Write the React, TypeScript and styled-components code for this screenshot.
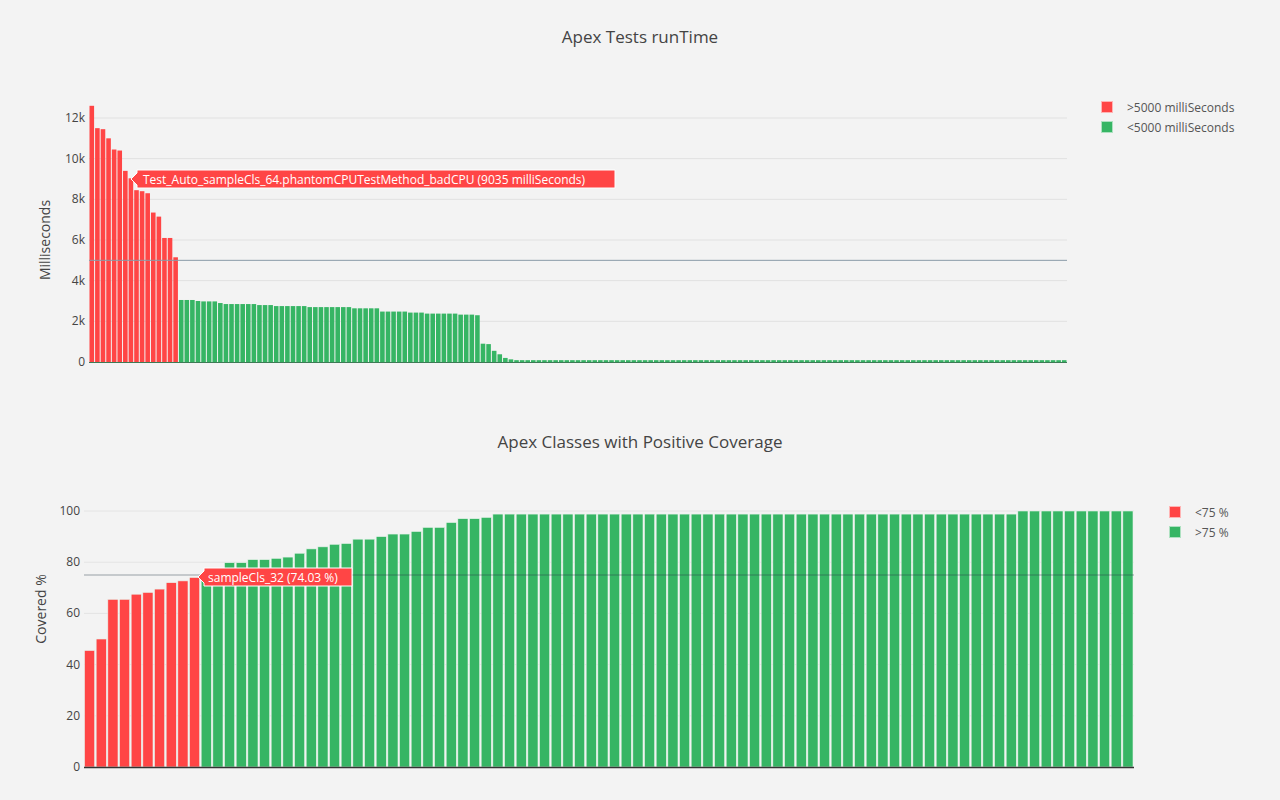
import React from "react";
import styled, { createGlobalStyle } from "styled-components";

const Global = createGlobalStyle`
  html, body { margin: 0; padding: 0; background: #f3f3f3; }
  body { font-family: "Open Sans", "Liberation Sans", sans-serif; color: #444; }
`;

const RED = "#ff4545";
const GREEN = "#36b564";

const Page = styled.div`
  width: 1280px;
  height: 800px;
  display: flex;
  flex-direction: column;
  background: #f3f3f3;
  overflow: hidden;
`;
const Panel = styled.section<{ $h: number }>`
  height: ${(p) => p.$h}px;
  display: flex;
  flex-direction: column;
`;
const Title = styled.div<{ $h: number }>`
  height: ${(p) => p.$h}px;
  display: flex;
  align-items: center;
  justify-content: center;
  font-size: 17px;
  color: #444;
`;
const Body = styled.div`
  flex: 1;
  display: flex;
`;
const Legend = styled.div<{ $ml: number; $pt: number }>`
  margin-left: ${(p) => p.$ml}px;
  padding-top: ${(p) => p.$pt}px;
  display: flex;
  flex-direction: column;
  gap: 6px;
`;
const LegendItem = styled.div`
  display: flex;
  align-items: center;
  gap: 14px;
  font-size: 12px;
  color: #555;
  height: 14px;
`;
const Swatch = styled.span<{ $c: string }>`
  width: 12px;
  height: 12px;
  background: ${(p) => p.$c};
  border: 1px solid rgba(255,255,255,0.6);
  box-sizing: border-box;
`;

const topRed = [12600, 11500, 11450, 11000, 10450, 10400, 9400, 9035, 8450, 8400, 8300, 7350, 7150, 6100, 6100, 5150];
const topGreen: number[] = [];
{
  const seg: [number, number][] = [
    [3050, 3], [3000, 1], [2980, 3], [2900, 1], [2850, 6], [2800, 3], [2750, 6], [2700, 8], [2640, 5],
    [2480, 5], [2430, 3], [2380, 6], [2330, 3], [2300, 6], [2250, 3], [2200, 4], [2180, 1],
  ];
  seg.forEach(([v, n]) => { for (let i = 0; i < n; i++) topGreen.push(v); });
  topGreen.length = 54;
  topGreen.push(900, 880, 550, 380, 200, 130);
  while (topRed.length + topGreen.length < 175) topGreen.push(90);
}
const topVals = [...topRed, ...topGreen];

const botRed = [45.5, 50, 65.5, 65.5, 67.5, 68.2, 69.5, 72, 72.7, 74.03];
const botGreen: number[] = [74.5, 76, 79.8, 79.8, 81, 81, 81.5, 82, 83.5, 85.2, 86, 87, 87.3, 89, 89, 90, 91, 91, 92, 93.6, 93.6, 95.5, 97, 97, 97.5];
for (let i = 0; i < 45; i++) botGreen.push(98.8);
for (let i = 0; i < 10; i++) botGreen.push(100);
const botVals = [...botRed, ...botGreen];

const Svg = styled.svg`
  display: block;
  flex: none;
  overflow: visible;
`;

function TopChart() {
  const x0 = 89, x1 = 1067, zero = 290, k = 244 / 12000;
  const step = (x1 - x0) / topVals.length;
  const y = (v: number) => zero - v * k;
  return (
    <Svg width={1090} height={328}>
      {[2000, 4000, 6000, 8000, 10000, 12000].map((v) => (
        <line key={v} x1={x0} x2={x1} y1={y(v)} y2={y(v)} stroke="#e1e1e1" />
      ))}
      {[0, 2, 4, 6, 8, 10, 12].map((v) => (
        <text key={v} x={85} y={y(v * 1000) + 4} fontSize={12} fill="#444" textAnchor="end">
          {v === 0 ? "0" : `${v}k`}
        </text>
      ))}
      <text transform={`translate(50 ${y(6000)}) rotate(-90)`} fontSize={14} fill="#444" textAnchor="middle">Milliseconds</text>
      {topVals.map((v, i) => (
        <rect key={i} x={x0 + i * step + 0.5} y={y(v)} width={step - 1} height={v * k}
          fill={i < topRed.length ? RED : GREEN} />
      ))}
      <line x1={x0} x2={x1} y1={zero + 0.5} y2={zero + 0.5} stroke="#3d7a55" />
      <line x1={x0} x2={x1} y1={y(5000)} y2={y(5000)} stroke="#8a9aa8" strokeWidth={1} />
      <path d="M131 107 L137 101 L137 98 L615 98 L615 116 L137 116 L137 113 Z" fill={RED} stroke="#fff" strokeWidth={1} />
      <text x={143} y={111.5} fontSize={12} fill="#fff">Test_Auto_sampleCls_64.phantomCPUTestMethod_badCPU (9035 milliSeconds)</text>
    </Svg>
  );
}

function BottomChart() {
  const x0 = 84, x1 = 1134, zero = 285, k = 2.56;
  const step = (x1 - x0) / botVals.length;
  const y = (v: number) => zero - v * k;
  return (
    <Svg width={1160} height={318}>
      {[20, 40, 60, 80, 100].map((v) => (
        <line key={v} x1={x0} x2={x1} y1={y(v)} y2={y(v)} stroke="#e4e4e4" />
      ))}
      {[0, 20, 40, 60, 80, 100].map((v) => (
        <text key={v} x={80} y={y(v) + 4} fontSize={12} fill="#444" textAnchor="end">{v}</text>
      ))}
      <text transform={`translate(46 ${y(50) - 30}) rotate(-90)`} fontSize={14} fill="#444" textAnchor="middle">Covered %</text>
      {botVals.map((v, i) => (
        <rect key={i} x={x0 + i * step + 0.5} y={y(v)} width={step - 1.5} height={v * k}
          fill={i < botRed.length ? RED : GREEN} stroke="#e8f3ec" strokeWidth={0.6} />
      ))}
      <line x1={x0} x2={x1} y1={zero + 0.5} y2={zero + 0.5} stroke="#333" strokeWidth={1.5} />
      <line x1={x0} x2={x1} y1={y(75)} y2={y(75)} stroke="rgba(40,60,70,0.45)" strokeWidth={1.2} />
      <path d="M198 95 L204 89 L204 86 L352 86 L352 104 L204 104 L204 101 Z" fill={RED} stroke="#fff" strokeWidth={1} />
      <text x={208} y={99.5} fontSize={12} fill="#fff">sampleCls_32 (74.03 %)</text>
    </Svg>
  );
}

export default function App() {
  return (
    <Page>
      <Global />
      <Panel $h={400}>
        <Title $h={72}>Apex Tests runTime</Title>
        <Body>
          <TopChart />
          <Legend $ml={11} $pt={28}>
            <LegendItem><Swatch $c={RED} />&gt;5000 milliSeconds</LegendItem>
            <LegendItem><Swatch $c={GREEN} />&lt;5000 milliSeconds</LegendItem>
          </Legend>
        </Body>
      </Panel>
      <Panel $h={400}>
        <Title $h={82}>Apex Classes with Positive Coverage</Title>
        <Body>
          <BottomChart />
          <Legend $ml={9} $pt={23}>
            <LegendItem><Swatch $c={RED} />&lt;75 %</LegendItem>
            <LegendItem><Swatch $c={GREEN} />&gt;75 %</LegendItem>
          </Legend>
        </Body>
      </Panel>
    </Page>
  );
}
